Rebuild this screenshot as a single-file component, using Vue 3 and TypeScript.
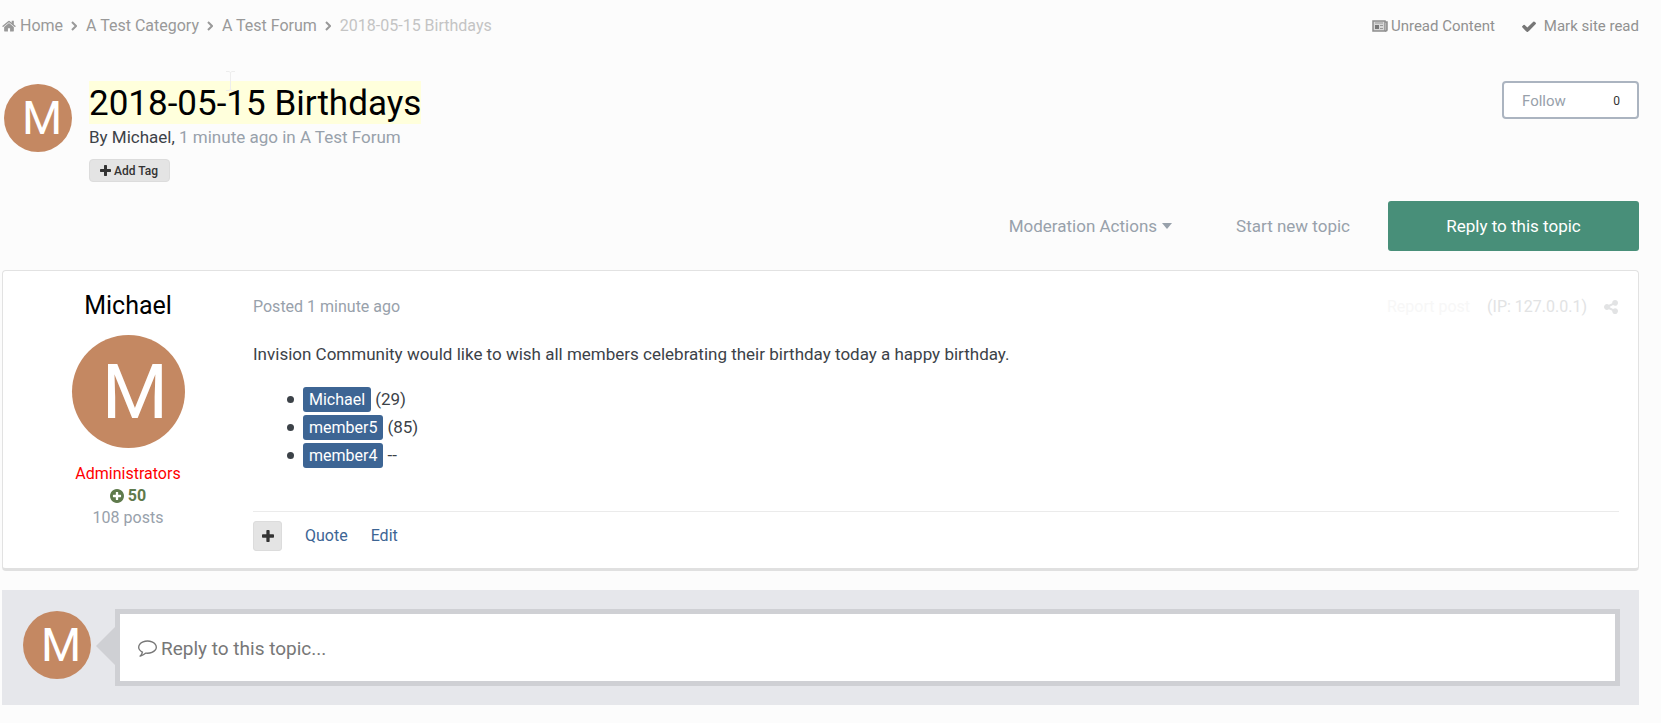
<script setup lang="ts">
import { ref } from 'vue'

interface Crumb {
  label: string
  home?: boolean
}

interface Celebrant {
  name: string
  note: string
}

const crumbs: Crumb[] = [
  { label: 'Home', home: true },
  { label: 'A Test Category' },
  { label: 'A Test Forum' },
]

const celebrants: Celebrant[] = [
  { name: 'Michael', note: '(29)' },
  { name: 'member5', note: '(85)' },
  { name: 'member4', note: '--' },
]

const reply = ref('')

const plusPath =
  'M1600 736v192q0 40-28 68t-68 28h-416v416q0 40-28 68t-68 28h-192q-40 0-68-28t-28-68v-416h-416q-40 0-68-28t-28-68v-192q0-40 28-68t68-28h416v-416q0-40 28-68t68-28h192q40 0 68 28t28 68v416h416q40 0 68 28t28 68z'
</script>

<template>
  <div class="page">
    <header class="topbar">
      <nav aria-label="Breadcrumb">
        <ol class="crumbs">
          <li v-for="crumb in crumbs" :key="crumb.label">
            <a href="#">
              <svg v-if="crumb.home" class="home" viewBox="64 200 1664 1360" aria-hidden="true">
                <path d="M1472 992v480q0 26-19 45t-45 19h-384v-384h-256v384h-384q-26 0-45-19t-19-45v-480q0-1 .5-3t.5-3l575-474 575 474q1 2 1 6zm223-69l-62 74q-8 9-21 11h-3q-13 0-21-7l-692-577-692 577q-12 8-24 7-13-2-21-11l-62-74q-8-10-7-23.5t11-21.5l719-599q32-26 76-26t76 26l244 204v-195q0-14 9-23t23-9h192q14 0 23 9t9 23v408l219 182q10 8 11 21.5t-7 23.5z" />
              </svg>{{ crumb.label }}</a>
            <svg class="angle" viewBox="0 0 6 10" aria-hidden="true"><path d="M1 1l4 4-4 4" /></svg>
          </li>
          <li class="current" aria-current="page">2018-05-15 Birthdays</li>
        </ol>
      </nav>
      <div class="tools">
        <a href="#">
          <svg class="news" viewBox="0 0 16 12" aria-hidden="true">
            <path d="M1 1h12v10H1z" fill="#d8d8d8" stroke="#8d8d8d" stroke-width="1.5" />
            <path d="M13 2h2v8q0 1-1 1h-1" fill="#b4b4b4" stroke="#8d8d8d" stroke-width="1.5" />
            <path d="M3 5h4v4H3z" fill="#777" />
            <path d="M3 3h8M8 5.5h3M8 8.5h3" fill="none" stroke="#999" />
          </svg>Unread Content</a>
        <a href="#">
          <svg class="check" viewBox="120 300 1552 1200" aria-hidden="true">
            <path d="M1671 566q0 40-28 68l-724 724-136 136q-28 28-68 28t-68-28l-136-136-362-362q-28-28-28-68t28-68l136-136q28-28 68-28t68 28l294 295 656-657q28-28 68-28t68 28l136 136q28 28 28 68z" />
          </svg>Mark site read</a>
      </div>
    </header>

    <section class="topic">
      <div class="avatar"><span>M</span></div>
      <div class="heading">
        <h1>2018-05-15 Birthdays</h1>
        <svg class="ibeam" viewBox="0 0 9 20" aria-hidden="true"><path d="M0 .5h3l1.500 1 1.500-1h3M4.500 1v18M0 19.500h3l1.500-1 1.500 1h3" /></svg>
        <p class="byline"><a href="#" class="dark">By Michael,</a> 1 minute ago in <a href="#">A Test Forum</a></p>
        <button type="button" class="tag">
          <svg viewBox="192 128 1408 1408" aria-hidden="true"><path :d="plusPath" /></svg>Add Tag
        </button>
      </div>
      <button type="button" class="follow"><span>Follow</span><span class="count">0</span></button>
    </section>

    <div class="actions">
      <button type="button" class="plain">Moderation Actions<svg viewBox="0 0 10 6" aria-hidden="true"><path d="M0 0h10L5 6z" /></svg></button>
      <a href="#" class="plain">Start new topic</a>
      <a href="#" class="primary">Reply to this topic</a>
    </div>

    <article class="post">
      <aside class="author">
        <h2>Michael</h2>
        <div class="avatar large"><span>M</span></div>
        <p class="group">Administrators</p>
        <p class="rep">
          <svg viewBox="128 128 1536 1536" aria-hidden="true">
            <path d="M1344 960v-128q0-26-19-45t-45-19h-256v-256q0-26-19-45t-45-19h-128q-26 0-45 19t-19 45v256h-256q-26 0-45 19t-19 45v128q0 26 19 45t45 19h256v256q0 26 19 45t45 19h128q26 0 45-19t19-45v-256h256q26 0 45-19t19-45zm320-64q0 209-103 385.500t-279.500 279.500-385.500 103-385.500-103-279.500-279.500-103-385.500 103-385.500 279.500-279.500 385.500-103 385.500 103 279.500 279.500 103 385.500z" />
          </svg>50
        </p>
        <p>108 posts</p>
      </aside>
      <div class="content">
        <div class="meta">
          <span>Posted 1 minute ago</span>
          <div class="meta-tools">
            <a href="#" class="report">Report post</a>
            <span>(IP: 127.0.0.1)</span>
            <a href="#" aria-label="Share">
              <svg viewBox="128 128 1536 1536" aria-hidden="true">
                <path d="M1344 1024q133 0 226.500 93.500t93.500 226.500-93.500 226.500-226.500 93.500-226.500-93.500-93.500-226.500q0-12 2-34l-360-180q-92 86-218 86-133 0-226.500-93.500t-93.500-226.500 93.500-226.500 226.500-93.500q126 0 218 86l360-180q-2-22-2-34 0-133 93.500-226.500t226.500-93.500 226.500 93.500 93.500 226.500-93.500 226.500-226.500 93.500q-126 0-218-86l-360 180q2 22 2 34t-2 34l360 180q92-86 218-86z" />
              </svg>
            </a>
          </div>
        </div>
        <p class="message">Invision Community would like to wish all members celebrating their birthday today a happy birthday.</p>
        <ul class="members">
          <li v-for="person in celebrants" :key="person.name">
            <a href="#">{{ person.name }}</a><span>{{ person.note }}</span>
          </li>
        </ul>
        <div class="controls">
          <button type="button" class="multi" aria-label="Multi-quote">
            <svg viewBox="192 128 1408 1408" aria-hidden="true"><path :d="plusPath" /></svg>
          </button>
          <a href="#">Quote</a>
          <a href="#">Edit</a>
        </div>
      </div>
    </article>

    <section class="composer">
      <div class="avatar"><span>M</span></div>
      <label class="box">
        <svg viewBox="0 256 1792 1536" aria-hidden="true">
          <path d="M896 384q-204 0-381.500 69.500t-282 187.500-104.500 255q0 112 71.500 213.500t201.500 175.500l87 50-27 96q-24 91-70 172 152-63 275-171l43-38 57 6q69 8 130 8 204 0 381.500-69.500t282-187.500 104.500-255-104.500-255-282-187.500-381.500-69.500zm896 512q0 174-120 321.500t-326 233-450 85.500q-70 0-145-8-198 175-460 242-49 14-114 22h-5q-15 0-27-10.500t-16-27.500v-1q-3-4-.5-12t2-10 4.500-9.500l6-9 7-8.500 8-9q7-8 31-34.500t34.500-38 31-39.500 32.500-51 27-59 26-76q-157-89-247.500-220t-90.500-281q0-174 120-321.500t326-233 450-85.500 450 85.500 326 233 120 321.500z" />
        </svg>
        <input v-model="reply" type="text" placeholder="Reply to this topic..." aria-label="Reply to this topic" />
      </label>
    </section>
  </div>
</template>

<style>
body {
  margin: 0;
  background: #fcfcfc;
}
</style>

<style scoped>
.page {
  box-sizing: border-box;
  padding: 15px 22px 18px 2px;
  font-family: Roboto, "Liberation Sans", sans-serif;
  font-size: 16px;
  line-height: 22px;
  color: #98a1ab;
}
* {
  box-sizing: border-box;
}
a {
  color: inherit;
  text-decoration: none;
}
button,
input {
  font: inherit;
  color: inherit;
  margin: 0;
}
button {
  cursor: pointer;
}
h1,
h2,
p,
ol,
ul {
  margin: 0;
  padding: 0;
  font-weight: 400;
}
svg {
  fill: currentColor;
  flex: none;
}
.topbar {
  display: flex;
  justify-content: space-between;
  color: #999;
}
.crumbs {
  display: flex;
  list-style: none;
}
.crumbs li,
.crumbs a,
.tools,
.tools a {
  display: flex;
  align-items: center;
}
.crumbs .current {
  color: #c4c4c4;
}
.home {
  width: 14px;
  height: 12px;
  margin-right: 4px;
}
.angle {
  width: 6px;
  height: 10px;
  margin: 0 9px 0 8px;
  fill: none;
  stroke: currentColor;
  stroke-width: 2;
}
.tools {
  gap: 27px;
  font-size: 15px;
  color: #919191;
}
.news {
  width: 16px;
  height: 12px;
  margin-right: 3px;
}
.check {
  width: 14px;
  height: 11px;
  margin-right: 8px;
  fill: #777;
}
.topic {
  display: flex;
  align-items: flex-start;
  margin-top: 44px;
}
.avatar {
  display: flex;
  align-items: center;
  justify-content: center;
  flex: none;
  width: 68px;
  height: 68px;
  padding-left: 8px;
  border-radius: 50%;
  background: #c48862;
  color: #fff;
  font-size: 46px;
  line-height: 1;
}
.topic .avatar {
  margin: 3px 17px 0 2px;
}
.heading {
  position: relative;
  flex: 1;
}
h1 {
  width: fit-content;
  padding-top: 2px;
  font-size: 35px;
  line-height: 41px;
  color: #000;
  background: #ffffdc;
}
.ibeam {
  position: absolute;
  left: 137px;
  top: -10px;
  width: 9px;
  height: 20px;
  fill: none;
  stroke: #ededed;
}
.byline {
  margin-top: 2px;
  font-size: 17px;
}
.dark {
  color: #3c4248;
}
.tag {
  display: flex;
  align-items: center;
  gap: 3px;
  height: 23px;
  margin-top: 11px;
  padding: 0 11px 0 10px;
  border: 1px solid #dcdcdc;
  border-radius: 4px;
  background: #e4e4e4;
  color: #333;
  font-size: 12px;
  font-weight: 500;
}
.tag svg {
  width: 11px;
  height: 11px;
}
.follow {
  display: flex;
  align-items: center;
  justify-content: space-between;
  width: 137px;
  height: 38px;
  padding: 2px 17px 0 18px;
  border: 2px solid #abb4c0;
  border-radius: 4px;
  background: #fff;
  font-size: 15px;
}
.count {
  font-size: 12px;
  color: #333;
}
.actions {
  display: flex;
  align-items: center;
  justify-content: flex-end;
  margin-top: 19px;
  font-size: 17px;
}
.plain {
  display: flex;
  align-items: center;
  padding: 0;
  border: 0;
  background: none;
  margin-right: 64px;
}
.plain svg {
  width: 10px;
  height: 6px;
  margin-left: 5px;
}
a.plain {
  margin-right: 38px;
}
.primary {
  width: 251px;
  padding: 14px 0;
  border-radius: 3px;
  background: #488f79;
  color: #fff;
  text-align: center;
}
.post {
  display: flex;
  margin-top: 19px;
  padding: 21px 19px 17px 0;
  border: 1px solid #e2e2e2;
  border-bottom: 3px solid #e0e0e0;
  border-radius: 4px;
  background: #fff;
}
.author {
  display: flex;
  flex-direction: column;
  align-items: center;
  flex: none;
  width: 250px;
}
h2 {
  font-size: 25px;
  line-height: 28px;
  color: #000;
}
.large {
  width: 113px;
  height: 113px;
  margin: 15px 0;
  padding-left: 14px;
  font-size: 76px;
}
.group {
  color: #f00;
}
.rep {
  display: flex;
  align-items: center;
  gap: 4px;
  font-weight: 700;
  color: #5f7a4c;
}
.rep svg {
  width: 14px;
  height: 14px;
}
.content {
  flex: 1;
}
.meta,
.meta-tools {
  display: flex;
  align-items: center;
  justify-content: space-between;
}
.meta {
  margin-top: 4px;
}
.meta-tools {
  gap: 17px;
  padding-right: 1px;
  color: #e2e3e4;
}
.meta-tools .report {
  color: #f7f7f7;
}
.meta-tools svg {
  display: block;
  width: 14px;
  height: 14px;
}
.message {
  margin-top: 25px;
  font-size: 17px;
  color: #3c4248;
}
.members {
  display: grid;
  gap: 3px;
  margin: 22px 0 0 34px;
  font-size: 17px;
  line-height: 25px;
  color: #3c4248;
  list-style: none;
}
.members li {
  display: flex;
  align-items: center;
}
.members li::before {
  content: "";
  width: 7px;
  height: 7px;
  margin-right: 9px;
  border-radius: 50%;
  background: currentColor;
}
.members a {
  margin-right: 4px;
  padding: 0 6px;
  border-radius: 3px;
  background: #3d6594;
  color: #fff;
  font-size: 16px;
}
.controls {
  display: flex;
  align-items: center;
  gap: 23px;
  margin-top: 43px;
  padding-top: 9px;
  border-top: 1px solid #ebebeb;
  color: #3d6594;
}
.multi {
  display: grid;
  place-items: center;
  width: 29px;
  height: 30px;
  padding: 0;
  border: 1px solid #dcdcdc;
  border-radius: 3px;
  background: #e4e4e4;
  color: #333;
}
.multi svg {
  width: 12px;
  height: 12px;
}
.composer {
  display: flex;
  align-items: flex-start;
  gap: 24px;
  margin-top: 19px;
  padding: 19px 19px 19px 21px;
  background: #e6e7eb;
}
.composer .avatar {
  margin-top: 2px;
}
.box {
  position: relative;
  display: flex;
  align-items: center;
  flex: 1;
  gap: 4px;
  height: 77px;
  padding: 2px 18px 0;
  border: 5px solid #cfd0d4;
  background: #fff;
  font-size: 19px;
  color: #777;
}
.box::before {
  content: "";
  position: absolute;
  left: -24px;
  top: 13px;
  border: 19px solid transparent;
  border-left-width: 0;
  border-right-color: #cfd0d4;
}
.box svg {
  width: 19px;
  height: 17px;
}
.box input {
  flex: 1;
  padding: 0;
  border: 0;
  outline: 0;
  background: none;
}
.box input::placeholder {
  color: #777;
  opacity: 1;
}
</style>
